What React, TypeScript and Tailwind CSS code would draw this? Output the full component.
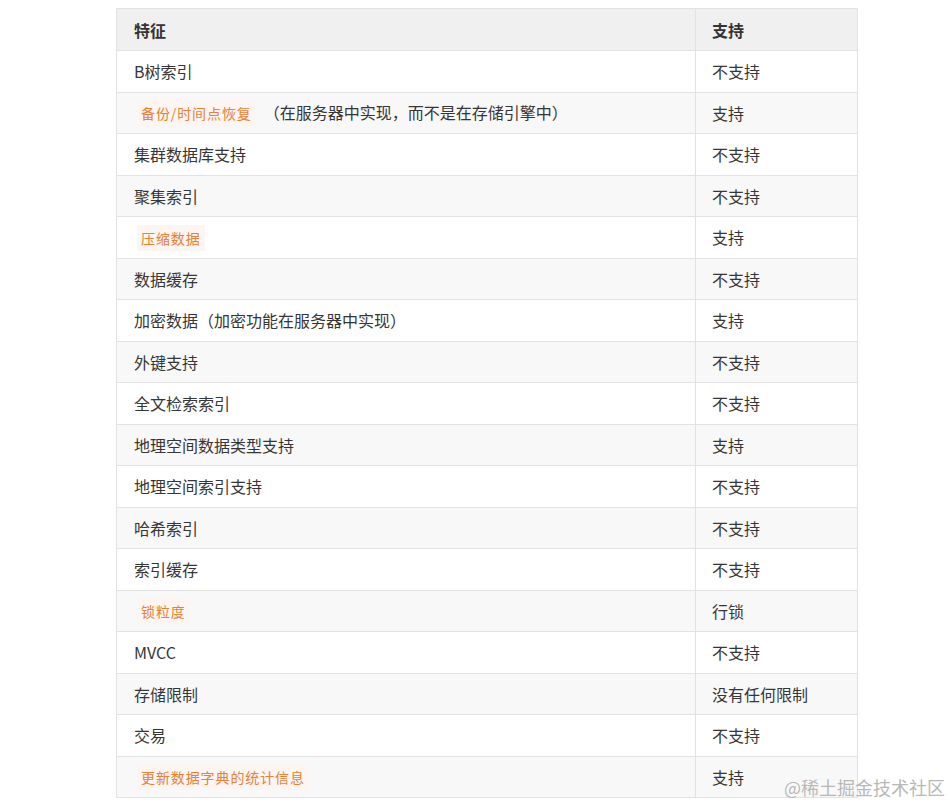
import React from "react";

type Row = { a: React.ReactNode; b: string };

const Code = ({ children }: { children: React.ReactNode }) => (
  <code
    className="ml-[3px] rounded-[2px] bg-[#fcf5f1] px-[4px] py-[3px] text-[14px] font-normal tracking-[0.9px] text-[#e98033]"
    style={{ fontFamily: '"Noto Sans CJK SC", "Noto Sans", sans-serif' }}
  >
    {children}
  </code>
);

const rows: Row[] = [
  { a: "B树索引", b: "不支持" },
  {
    a: (
      <>
        <Code>备份/时间点恢复</Code>
        <span className="ml-[8px]">（在服务器中实现，而不是在存储引擎中）</span>
      </>
    ),
    b: "支持",
  },
  { a: "集群数据库支持", b: "不支持" },
  { a: "聚集索引", b: "不支持" },
  { a: <Code>压缩数据</Code>, b: "支持" },
  { a: "数据缓存", b: "不支持" },
  { a: "加密数据（加密功能在服务器中实现）", b: "支持" },
  { a: "外键支持", b: "不支持" },
  { a: "全文检索索引", b: "不支持" },
  { a: "地理空间数据类型支持", b: "支持" },
  { a: "地理空间索引支持", b: "不支持" },
  { a: "哈希索引", b: "不支持" },
  { a: "索引缓存", b: "不支持" },
  { a: <Code>锁粒度</Code>, b: "行锁" },
  { a: "MVCC", b: "不支持" },
  { a: "存储限制", b: "没有任何限制" },
  { a: "交易", b: "不支持" },
  { a: <Code>更新数据字典的统计信息</Code>, b: "支持" },
];

export default function App() {
  return (
    <div
      className="relative h-[806px] w-[950px] overflow-hidden bg-white text-[#363636]"
      style={{ fontFamily: '"Noto Sans CJK SC", "Noto Sans", sans-serif' }}
    >
      <div className="pl-[116px] pt-[8px]">
        <table className="w-[741px] table-fixed border-collapse text-[16px]">
          <colgroup>
            <col className="w-[579px]" />
            <col className="w-[162px]" />
          </colgroup>
          <thead>
            <tr className="h-[42px] bg-[#f0f0f0]">
              <th className="border border-[#e2e2e2] pl-[17px] text-left font-bold text-[#333]">特征</th>
              <th className="border border-[#e2e2e2] pl-[16px] text-left font-bold text-[#333]">支持</th>
            </tr>
          </thead>
          <tbody>
            {rows.map((r, i) => (
              <tr
                key={i}
                className={i % 2 === 0 ? "h-[41.5px] bg-white" : "h-[41.5px] bg-[#f8f8f8]"}
              >
                <td className="border border-[#e2e2e2] pl-[17px] leading-[24px]">{r.a}</td>
                <td className="border border-[#e2e2e2] pl-[16px] leading-[24px]">{r.b}</td>
              </tr>
            ))}
          </tbody>
        </table>
      </div>
      <div
        className="absolute left-[784px] top-[775px] text-[18px] leading-[24px] text-[#b8b8b8]"
        style={{ fontFamily: '"Noto Sans CJK SC", serif' }}
      >
        @稀土掘金技术社区
      </div>
    </div>
  );
}
